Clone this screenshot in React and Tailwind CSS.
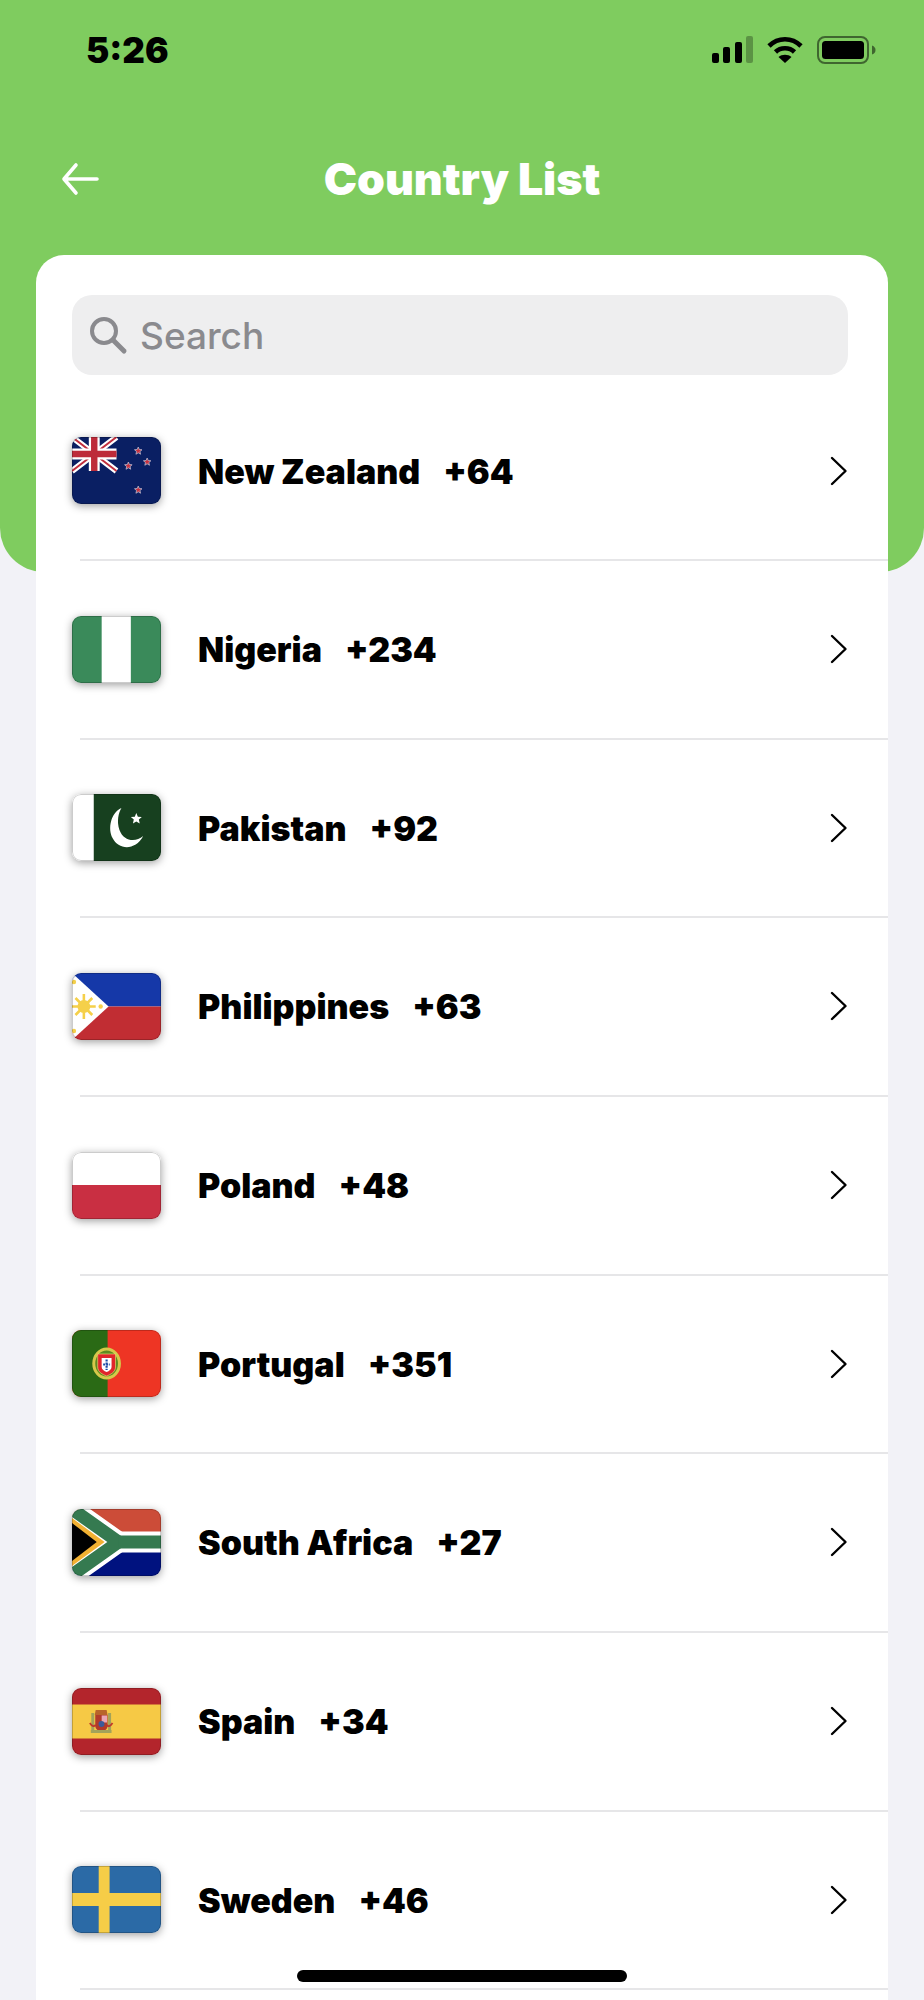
const FONT = "font-['Inter','Liberation_Sans',sans-serif]";

function Star({ x, y, r = 4 }) {
  const pts = [];
  for (let i = 0; i < 10; i++) {
    const a = -Math.PI / 2 + (i * Math.PI) / 5;
    const rr = i % 2 === 0 ? r : r * 0.45;
    pts.push(`${(x + rr * Math.cos(a)).toFixed(2)},${(y + rr * Math.sin(a)).toFixed(2)}`);
  }
  return <polygon points={pts.join(" ")} fill="#c8303f" stroke="#b9bcd2" strokeWidth="0.8" />;
}

const flags = {
  nz: (
    <>
      <rect width="90" height="67" fill="#0a1f63" />
      <path d="M0 0L45 34M45 0L0 34" stroke="#fff" strokeWidth="6" />
      <path d="M0 0L45 34M45 0L0 34" stroke="#c02f3e" strokeWidth="2" />
      <path d="M22.5 0V34M0 17H45" stroke="#fff" strokeWidth="11" />
      <path d="M22.5 0V34M0 17H45" stroke="#bd2b3a" strokeWidth="6.5" />
      <Star x={67} y={14} />
      <Star x={76} y={25} />
      <Star x={57} y={29} />
      <Star x={67} y={53} />
    </>
  ),
  ng: (
    <>
      <rect width="90" height="67" fill="#3a8a5a" />
      <rect x="30" width="29.5" height="67" fill="#fff" />
    </>
  ),
  pk: (
    <>
      <rect width="90" height="67" fill="#fff" />
      <rect x="22" width="68" height="67" fill="#17401f" />
      <path d="M50 14C39 19 36 35 41 44C47 56 64 57 72 42C64 49 52 47 48 36C45 27 47 19 50 14Z" fill="#fff" />
      <path d="M65 19l1.6 3.7 4 .3-3 2.6.9 3.9-3.5-2.1-3.4 2.1.9-3.9-3-2.6 4-.3z" fill="#fff" />
    </>
  ),
  ph: (
    <>
      <rect width="90" height="33.5" fill="#1538a8" />
      <rect y="33.5" width="90" height="33.5" fill="#c12d33" />
      <path d="M0 0L37 33.5L0 67Z" fill="#fff" />
      <path d="M12 21V46M0 33.5H24M3.5 25L20.5 42M3.5 42L20.5 25" stroke="#f5d04a" strokeWidth="2.6" />
      <circle cx="12" cy="33.5" r="6.5" fill="#f5d04a" />
      <circle cx="2" cy="9" r="2.2" fill="#f5d04a" />
      <circle cx="2" cy="58" r="2.2" fill="#f5d04a" />
      <circle cx="29" cy="33.5" r="2.2" fill="#f5d04a" />
    </>
  ),
  pl: (
    <>
      <rect width="90" height="33" fill="#fff" />
      <rect y="33" width="90" height="34" fill="#c92f42" />
    </>
  ),
  pt: (
    <>
      <rect width="90" height="67" fill="#ee3524" />
      <rect width="36" height="67" fill="#2a6a15" />
      <ellipse cx="35" cy="33.5" rx="13" ry="14.5" fill="#5f8a20" stroke="#d5c94a" strokeWidth="3" />
      <path d="M26 24H44V37C44 42 39 44.5 35 46C31 44.5 26 42 26 37Z" fill="#e0252b" stroke="#f5e27a" strokeWidth="0.6" />
      <path d="M30 28H40V37C40 39.5 37.5 41 35 42C32.5 41 30 39.5 30 37Z" fill="#fff" />
      <path d="M35 29.5V40M31.5 34.5H38.5" stroke="#1a4aa4" strokeWidth="2.2" strokeDasharray="2 1.1" />
    </>
  ),
  za: (
    <>
      <rect width="90" height="33" fill="#cc4c38" />
      <rect y="33" width="90" height="34" fill="#00127f" />
      <path d="M-5 -3.5L47 33L-5 69.5" stroke="#fff" strokeWidth="21" fill="none" />
      <path d="M47 33H90" stroke="#fff" strokeWidth="21" />
      <path d="M-5 -3.5L47 33L-5 69.5" stroke="#357a50" strokeWidth="13" fill="none" />
      <path d="M47 33H90" stroke="#357a50" strokeWidth="13" />
      <path d="M0 9L33 33L0 57Z" fill="#f2b132" />
      <path d="M0 14L25 33L0 52Z" fill="#000" />
    </>
  ),
  es: (
    <>
      <rect width="90" height="67" fill="#b3252c" />
      <rect y="16.5" width="90" height="34" fill="#f6c945" />
      <rect x="19.5" y="25" width="3" height="17" fill="#a3a35a" />
      <rect x="36.5" y="25" width="3" height="17" fill="#a3a35a" />
      <path d="M18 35C20 38 22 39 24 37M41 35C39 38 37 39 35 37" stroke="#c0392b" strokeWidth="1.8" fill="none" />
      <path d="M24 22H35L36 27H23Z" fill="#b8642a" />
      <path d="M23.5 27H36V38C36 41 33 43 29.8 43C26.5 43 23.5 41 23.5 38Z" fill="#b23a2a" />
      <rect x="30" y="27.5" width="5.5" height="7" fill="#e8a6b4" />
      <circle cx="29.8" cy="36" r="3" fill="#3c5a9a" />
      <rect x="19" y="42" width="21" height="3" fill="#a3a35a" />
    </>
  ),
  se: (
    <>
      <rect width="90" height="67" fill="#2b6aa6" />
      <rect x="27" width="11" height="67" fill="#f6cd47" />
      <rect y="27" width="90" height="13" fill="#f6cd47" />
    </>
  ),
};

function Flag({ code }) {
  return (
    <div className="relative h-[67px] w-[89px] shrink-0 overflow-hidden rounded-[9px] shadow-[0_2px_9px_rgba(0,0,0,0.38)]">
      <svg viewBox="0 0 90 67" width="89" height="67" preserveAspectRatio="none" className="block">
        {flags[code]}
      </svg>
      <div className="absolute inset-0 rounded-[9px] border border-black/20" />
    </div>
  );
}

const countries = [
  ["nz", "New Zealand", "+64"],
  ["ng", "Nigeria", "+234"],
  ["pk", "Pakistan", "+92"],
  ["ph", "Philippines", "+63"],
  ["pl", "Poland", "+48"],
  ["pt", "Portugal", "+351"],
  ["za", "South Africa", "+27"],
  ["es", "Spain", "+34"],
  ["se", "Sweden", "+46"],
];

function Row({ code, name, dial }) {
  return (
    <div className="h-[178.67px] shrink-0 pl-[36px]">
      <div className="flex h-[177px] items-center pr-[40px]">
        <Flag code={code} />
        <div className="ml-[37px] flex flex-1 items-center gap-[23px] pt-[2px] text-[34px] font-black leading-none text-black">
          <span>{name}</span>
          <span>{dial}</span>
        </div>
        <svg width="18" height="30" viewBox="0 0 18 30" fill="none">
          <path d="M2 2L15.5 15L2 28" stroke="#000" strokeWidth="2.4" strokeLinecap="round" strokeLinejoin="round" />
        </svg>
      </div>
      <div className="ml-[8px] h-[2px] bg-[#e6e6e8]" />
    </div>
  );
}

export default function App() {
  return (
    <div className={`${FONT} relative h-[2000px] w-[924px] overflow-hidden bg-[#f2f2f7]`}>
      <header className="h-[572px] rounded-b-[44px] bg-[#7fcc5f]">
        <div className="flex h-[140px] items-start justify-between pl-[86px] pr-[47px] pt-[30px]">
          <span className="text-[35px] font-black leading-[40px] text-black">5:26</span>
          <div className="mt-[6px] flex items-center">
            <svg width="42" height="28" viewBox="0 0 42 28">
              <rect x="0" y="17" width="7" height="10" rx="2" fill="#000" />
              <rect x="11" y="11" width="7" height="16" rx="2" fill="#000" />
              <rect x="23" y="6" width="7" height="21" rx="2" fill="#000" />
              <rect x="34" y="0" width="7" height="27" rx="2" fill="#000" opacity="0.28" />
            </svg>
            <svg className="ml-[13px]" width="36" height="28" viewBox="0 0 36 28" fill="none">
              <path d="M2 10C11 1 25 1 34 10" stroke="#000" strokeWidth="4.6" />
              <path d="M8.5 16C13.5 11 22.5 11 27.5 16" stroke="#000" strokeWidth="4.6" />
              <path d="M18 27L11.5 21C15 18 21 18 24.5 21Z" fill="#000" />
            </svg>
            <svg className="ml-[14px]" width="60" height="28" viewBox="0 0 60 28" fill="none">
              <rect x="1" y="1" width="50" height="26" rx="7" stroke="#000" strokeOpacity="0.5" strokeWidth="2" />
              <rect x="5" y="5" width="42" height="18" rx="3.5" fill="#000" />
              <path d="M55 9.5C57.5 10.5 58.5 12 58.5 14C58.5 16 57.5 17.5 55 18.5Z" fill="#000" fillOpacity="0.5" />
            </svg>
          </div>
        </div>
        <div className="relative flex h-[78px] items-center justify-center">
          <svg className="absolute left-[60px] top-[22px]" width="40" height="34" viewBox="0 0 40 34" fill="none">
            <path d="M16 3L4 17L16 31M4 17H37" stroke="#fff" strokeWidth="3.6" strokeLinecap="round" strokeLinejoin="round" />
          </svg>
          <h1 className="text-[44.6px] font-black leading-none text-white">Country List</h1>
        </div>
      </header>

      <main className="mx-[36px] -mt-[317px] flex h-[1800px] flex-col rounded-t-[28px] bg-white">
        <div className="ml-[36px] mr-[40px] mt-[40px] flex h-[80px] shrink-0 items-center rounded-[20px] bg-[#eeeeef] pl-[16px]">
          <svg width="40" height="40" viewBox="0 0 40 40" fill="none">
            <circle cx="16" cy="16" r="12" stroke="#8a8a8e" strokeWidth="4" />
            <path d="M25 25L36 36" stroke="#8a8a8e" strokeWidth="5" strokeLinecap="round" />
          </svg>
          <span className="ml-[12px] text-[37px] font-medium leading-none text-[#8a8a8e]">Search</span>
        </div>
        <div className="mt-[7px] flex flex-col">
          {countries.map(([code, name, dial]) => (
            <Row key={code} code={code} name={name} dial={dial} />
          ))}
        </div>
      </main>

      <div className="absolute bottom-[18px] left-[297px] h-[12px] w-[330px] rounded-full bg-black" />
    </div>
  );
}
